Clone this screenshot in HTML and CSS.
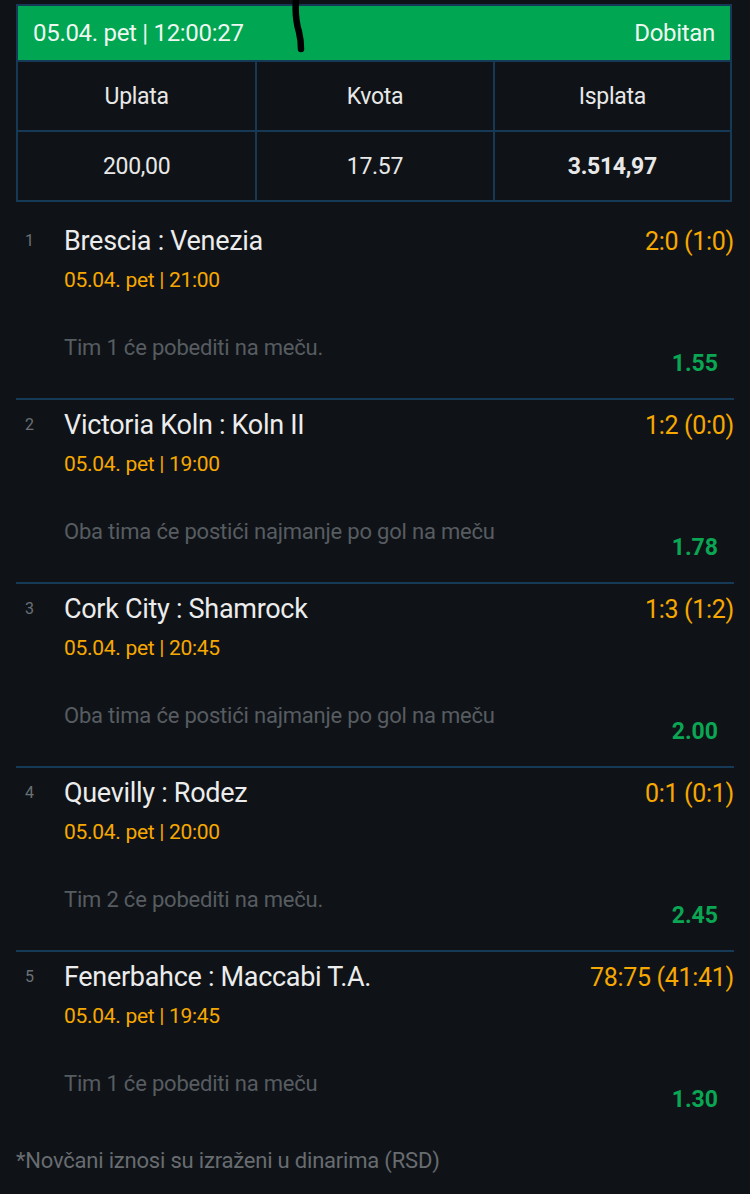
FILE: index.html
```html
<!DOCTYPE html>
<html lang="sr">
<head>
    <meta charset="UTF-8">
    <meta name="viewport" content="width=device-width, initial-scale=1.0">
    <title>Tiket</title>
    <link rel="stylesheet" href="styles.css">
</head>
<body>
    <div class="ticket">
        <div class="summary">
            <div class="status-bar">
                <span>05.04. pet | 12:00:27</span>
                <span>Dobitan</span>
            </div>
            <div class="summary-grid">
                <div class="cell">Uplata</div>
                <div class="cell">Kvota</div>
                <div class="cell">Isplata</div>
                <div class="cell">200,00</div>
                <div class="cell">17.57</div>
                <div class="cell strong">3.514,97</div>
            </div>
            <svg class="scribble" width="20" height="54" viewBox="0 0 20 54">
                <path d="M7 0 C6 12 7 22 10 32 C12 40 12 45 12 49" fill="none" stroke="#000" stroke-width="6.5" stroke-linecap="round"/>
            </svg>
        </div>

        <div class="matches">
            <div class="match">
                <div class="num">1</div>
                <div class="info">
                    <div class="top-line">
                        <span class="teams">Brescia : Venezia</span>
                        <span class="score">2:0 (1:0)</span>
                    </div>
                    <div class="date">05.04. pet | 21:00</div>
                    <div class="bottom-line">
                        <span class="tip">Tim 1 će pobediti na meču.</span>
                        <span class="odd">1.55</span>
                    </div>
                </div>
            </div>
            <div class="match">
                <div class="num">2</div>
                <div class="info">
                    <div class="top-line">
                        <span class="teams">Victoria Koln : Koln II</span>
                        <span class="score">1:2 (0:0)</span>
                    </div>
                    <div class="date">05.04. pet | 19:00</div>
                    <div class="bottom-line">
                        <span class="tip">Oba tima će postići najmanje po gol na meču</span>
                        <span class="odd">1.78</span>
                    </div>
                </div>
            </div>
            <div class="match">
                <div class="num">3</div>
                <div class="info">
                    <div class="top-line">
                        <span class="teams">Cork City : Shamrock</span>
                        <span class="score">1:3 (1:2)</span>
                    </div>
                    <div class="date">05.04. pet | 20:45</div>
                    <div class="bottom-line">
                        <span class="tip">Oba tima će postići najmanje po gol na meču</span>
                        <span class="odd">2.00</span>
                    </div>
                </div>
            </div>
            <div class="match">
                <div class="num">4</div>
                <div class="info">
                    <div class="top-line">
                        <span class="teams">Quevilly : Rodez</span>
                        <span class="score">0:1 (0:1)</span>
                    </div>
                    <div class="date">05.04. pet | 20:00</div>
                    <div class="bottom-line">
                        <span class="tip">Tim 2 će pobediti na meču.</span>
                        <span class="odd">2.45</span>
                    </div>
                </div>
            </div>
            <div class="match">
                <div class="num">5</div>
                <div class="info">
                    <div class="top-line">
                        <span class="teams">Fenerbahce : Maccabi T.A.</span>
                        <span class="score">78:75 (41:41)</span>
                    </div>
                    <div class="date">05.04. pet | 19:45</div>
                    <div class="bottom-line">
                        <span class="tip">Tim 1 će pobediti na meču</span>
                        <span class="odd">1.30</span>
                    </div>
                </div>
            </div>
        </div>

        <p class="note">*Novčani iznosi su izraženi u dinarima (RSD)</p>
    </div>
</body>
</html>
```

FILE: styles.css
```css
body {
    margin: 0;
    padding: 4px 16px 0;
    background-color: #0f1317;
    color: #e8e8e8;
    font-family: Roboto, "Liberation Sans", sans-serif;
}

.ticket {
    width: 718px;
}

.summary {
    position: relative;
    width: 716px;
    border: 2px solid #163a56;
    box-sizing: border-box;
}

.status-bar {
    display: flex;
    justify-content: space-between;
    align-items: center;
    height: 54px;
    padding: 0 15px;
    background: #00a651;
    color: #eef8f1;
    font-size: 24px;
    letter-spacing: -0.3px;
}

.summary-grid {
    display: grid;
    grid-template-columns: 1fr 1fr 1fr;
}

.cell {
    height: 68px;
    display: flex;
    align-items: center;
    justify-content: center;
    font-size: 23px;
    letter-spacing: -0.3px;
    border-top: 2px solid #163a56;
    border-left: 2px solid #163a56;
}

.cell:nth-child(3n+1) {
    border-left: none;
}

.cell.strong {
    font-weight: bold;
}

.scribble {
    position: absolute;
    left: 271px;
    top: -6px;
}

.matches {
    margin-top: 14px;
}

.match {
    display: flex;
    height: 182px;
    border-bottom: 2px solid #163a56;
}

.match:last-child {
    border-bottom: none;
}

.num {
    width: 48px;
    padding-top: 15px;
    padding-left: 9px;
    box-sizing: border-box;
    font-size: 16px;
    color: #6b7075;
}

.info {
    flex: 1;
    padding-top: 9px;
}

.top-line {
    display: flex;
    justify-content: space-between;
    align-items: center;
    height: 32px;
}

.teams {
    font-size: 27px;
    letter-spacing: -0.3px;
    color: #ececec;
}

.score {
    font-size: 25px;
    letter-spacing: -0.3px;
    color: #f7a800;
}

.date {
    margin-top: 10px;
    height: 26px;
    line-height: 26px;
    font-size: 21px;
    letter-spacing: -0.3px;
    color: #f7a800;
}

.bottom-line {
    display: flex;
    justify-content: space-between;
    margin-top: 42px;
    padding-right: 16px;
}

.tip {
    line-height: 26px;
    font-size: 22px;
    letter-spacing: -0.2px;
    color: #575c61;
}

.odd {
    margin-top: 16px;
    line-height: 26px;
    font-size: 23px;
    font-weight: bold;
    color: #0aa653;
}

.note {
    margin: 14px 0 0;
    font-size: 22px;
    letter-spacing: -0.2px;
    color: #686c71;
}
```
